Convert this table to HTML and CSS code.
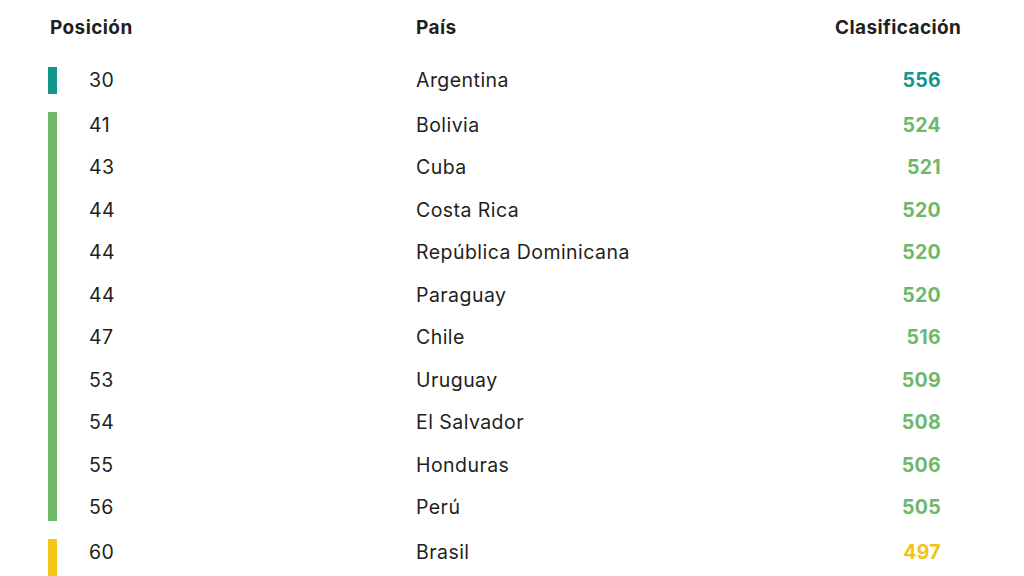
FILE: index.html
```html
<!DOCTYPE html>
<html lang="es">
<head>
<meta charset="utf-8">
<title>Clasificación</title>
<link rel="stylesheet" href="styles.css">
</head>
<body>
<div class="table">
  <div class="head">
    <div class="h-pos">Posición</div>
    <div class="h-country">País</div>
    <div class="h-score">Clasificación</div>
  </div>

  <div class="group teal">
    <div class="bar"></div>
    <div class="rows">
      <div class="row"><span class="pos">30</span><span class="country">Argentina</span><span class="score">556</span></div>
    </div>
  </div>

  <div class="group green">
    <div class="bar"></div>
    <div class="rows">
      <div class="row"><span class="pos">41</span><span class="country">Bolivia</span><span class="score">524</span></div>
      <div class="row"><span class="pos">43</span><span class="country">Cuba</span><span class="score">521</span></div>
      <div class="row"><span class="pos">44</span><span class="country">Costa Rica</span><span class="score">520</span></div>
      <div class="row"><span class="pos">44</span><span class="country">República Dominicana</span><span class="score">520</span></div>
      <div class="row"><span class="pos">44</span><span class="country">Paraguay</span><span class="score">520</span></div>
      <div class="row"><span class="pos">47</span><span class="country">Chile</span><span class="score">516</span></div>
      <div class="row"><span class="pos">53</span><span class="country">Uruguay</span><span class="score">509</span></div>
      <div class="row"><span class="pos">54</span><span class="country">El Salvador</span><span class="score">508</span></div>
      <div class="row"><span class="pos">55</span><span class="country">Honduras</span><span class="score">506</span></div>
      <div class="row"><span class="pos">56</span><span class="country">Perú</span><span class="score">505</span></div>
    </div>
  </div>

  <div class="group yellow">
    <div class="bar"></div>
    <div class="rows">
      <div class="row"><span class="pos">60</span><span class="country">Brasil</span><span class="score">497</span></div>
    </div>
  </div>
</div>
</body>
</html>
```

FILE: styles.css
```css
html, body {
  margin: 0;
  padding: 0;
  background: #ffffff;
}

body {
  font-family: Inter, "Noto Sans", sans-serif;
  color: #1f1f21;
  overflow: hidden;
}

.table {
  padding: 14px 0 0 48px;
  display: flex;
  flex-direction: column;
  gap: 17.5px;
}

.head {
  display: grid;
  grid-template-columns: 366px 419px auto;
  padding-left: 2px;
  height: 28px;
  line-height: 28px;
  font-weight: 700;
  font-size: 19px;
  letter-spacing: 0.4px;
  margin-bottom: 7.5px;
}

.group {
  display: flex;
  align-items: stretch;
}

.bar {
  width: 9px;
  flex: none;
}

.teal .bar { background: #14968a; }
.green .bar { background: #72b96b; }
.yellow .bar { background: #f5c816; }

.rows {
  display: flex;
  flex-direction: column;
  gap: 15.5px;
  padding-left: 32px;
}

.yellow .rows {
  padding-bottom: 30px;
}

.row {
  display: grid;
  grid-template-columns: 327px 1fr 60px;
  width: 852px;
  height: 27px;
  line-height: 27px;
  font-size: 19.5px;
  letter-spacing: 0.45px;
}

.score {
  text-align: right;
  font-weight: 700;
  letter-spacing: 0.3px;
}

.teal .score { color: #14968a; }
.green .score { color: #6fb86a; }
.yellow .score { color: #f2c312; }
```
